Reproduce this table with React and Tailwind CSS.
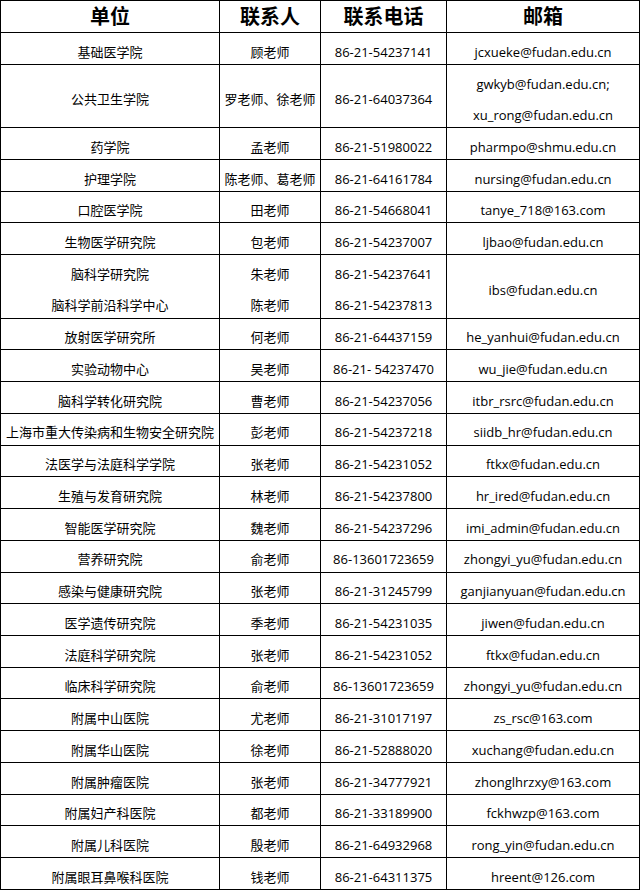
import React from 'react';

const rows = [
    { unit: ['基础医学院'], person: ['顾老师'], phone: ['86-21-54237141'], email: ['jcxueke@fudan.edu.cn'], span: 1 },
    { unit: ['公共卫生学院'], person: ['罗老师、徐老师'], phone: ['86-21-64037364'], email: ['gwkyb@fudan.edu.cn;', 'xu_rong@fudan.edu.cn'], span: 2 },
    { unit: ['药学院'], person: ['孟老师'], phone: ['86-21-51980022'], email: ['pharmpo@shmu.edu.cn'], span: 1 },
    { unit: ['护理学院'], person: ['陈老师、葛老师'], phone: ['86-21-64161784'], email: ['nursing@fudan.edu.cn'], span: 1 },
    { unit: ['口腔医学院'], person: ['田老师'], phone: ['86-21-54668041'], email: ['tanye_718@163.com'], span: 1 },
    { unit: ['生物医学研究院'], person: ['包老师'], phone: ['86-21-54237007'], email: ['ljbao@fudan.edu.cn'], span: 1 },
    { unit: ['脑科学研究院', '脑科学前沿科学中心'], person: ['朱老师', '陈老师'], phone: ['86-21-54237641', '86-21-54237813'], email: ['ibs@fudan.edu.cn'], span: 2 },
    { unit: ['放射医学研究所'], person: ['何老师'], phone: ['86-21-64437159'], email: ['he_yanhui@fudan.edu.cn'], span: 1 },
    { unit: ['实验动物中心'], person: ['吴老师'], phone: ['86-21- 54237470'], email: ['wu_jie@fudan.edu.cn'], span: 1 },
    { unit: ['脑科学转化研究院'], person: ['曹老师'], phone: ['86-21-54237056'], email: ['itbr_rsrc@fudan.edu.cn'], span: 1 },
    { unit: ['上海市重大传染病和生物安全研究院'], person: ['彭老师'], phone: ['86-21-54237218'], email: ['siidb_hr@fudan.edu.cn'], span: 1 },
    { unit: ['法医学与法庭科学学院'], person: ['张老师'], phone: ['86-21-54231052'], email: ['ftkx@fudan.edu.cn'], span: 1 },
    { unit: ['生殖与发育研究院'], person: ['林老师'], phone: ['86-21-54237800'], email: ['hr_ired@fudan.edu.cn'], span: 1 },
    { unit: ['智能医学研究院'], person: ['魏老师'], phone: ['86-21-54237296'], email: ['imi_admin@fudan.edu.cn'], span: 1 },
    { unit: ['营养研究院'], person: ['俞老师'], phone: ['86-13601723659'], email: ['zhongyi_yu@fudan.edu.cn'], span: 1 },
    { unit: ['感染与健康研究院'], person: ['张老师'], phone: ['86-21-31245799'], email: ['ganjianyuan@fudan.edu.cn'], span: 1 },
    { unit: ['医学遗传研究院'], person: ['季老师'], phone: ['86-21-54231035'], email: ['jiwen@fudan.edu.cn'], span: 1 },
    { unit: ['法庭科学研究院'], person: ['张老师'], phone: ['86-21-54231052'], email: ['ftkx@fudan.edu.cn'], span: 1 },
    { unit: ['临床科学研究院'], person: ['俞老师'], phone: ['86-13601723659'], email: ['zhongyi_yu@fudan.edu.cn'], span: 1 },
    { unit: ['附属中山医院'], person: ['尤老师'], phone: ['86-21-31017197'], email: ['zs_rsc@163.com'], span: 1 },
    { unit: ['附属华山医院'], person: ['徐老师'], phone: ['86-21-52888020'], email: ['xuchang@fudan.edu.cn'], span: 1 },
    { unit: ['附属肿瘤医院'], person: ['张老师'], phone: ['86-21-34777921'], email: ['zhonglhrzxy@163.com'], span: 1 },
    { unit: ['附属妇产科医院'], person: ['都老师'], phone: ['86-21-33189900'], email: ['fckhwzp@163.com'], span: 1 },
    { unit: ['附属儿科医院'], person: ['殷老师'], phone: ['86-21-64932968'], email: ['rong_yin@fudan.edu.cn'], span: 1 },
    { unit: ['附属眼耳鼻喉科医院'], person: ['钱老师'], phone: ['86-21-64311375'], email: ['hreent@126.com'], span: 1 },
];

// each line sits in its own slot of one row unit, a bit below centre like the sheet
const Cell = ({ lines }) => (
    <td className="border border-black p-0 text-center align-middle">
        <div className="flex flex-col justify-center">
            {lines.map((t, i) => (
                <div key={i} className="h-[30.7px] pt-[8px] flex items-center justify-center whitespace-nowrap">{t}</div>
            ))}
        </div>
    </td>
);

const App = () => {
    return (
        <div className="bg-white w-[640px] h-[892px] font-['Open_Sans','Noto_Sans_CJK_SC',sans-serif] text-[13px] text-black">
            <table className="w-[639px] table-fixed border-collapse">
                <colgroup>
                    <col className="w-[219px]" />
                    <col className="w-[101px]" />
                    <col className="w-[126px]" />
                    <col className="w-[193px]" />
                </colgroup>
                <thead>
                    <tr className="h-[32px] text-[20px] font-bold">
                        <th className="border border-black p-0">单位</th>
                        <th className="border border-black p-0">联系人</th>
                        <th className="border border-black p-0">联系电话</th>
                        <th className="border border-black p-0">邮箱</th>
                    </tr>
                </thead>
                <tbody>
                    {rows.map((r, i) => (
                        <tr key={i} className={r.span === 2 ? 'h-[63.5px]' : 'h-[31.74px]'}>
                            <Cell lines={r.unit} />
                            <Cell lines={r.person} />
                            <Cell lines={r.phone} />
                            <Cell lines={r.email} />
                        </tr>
                    ))}
                </tbody>
            </table>
        </div>
    );
};

export default App;
